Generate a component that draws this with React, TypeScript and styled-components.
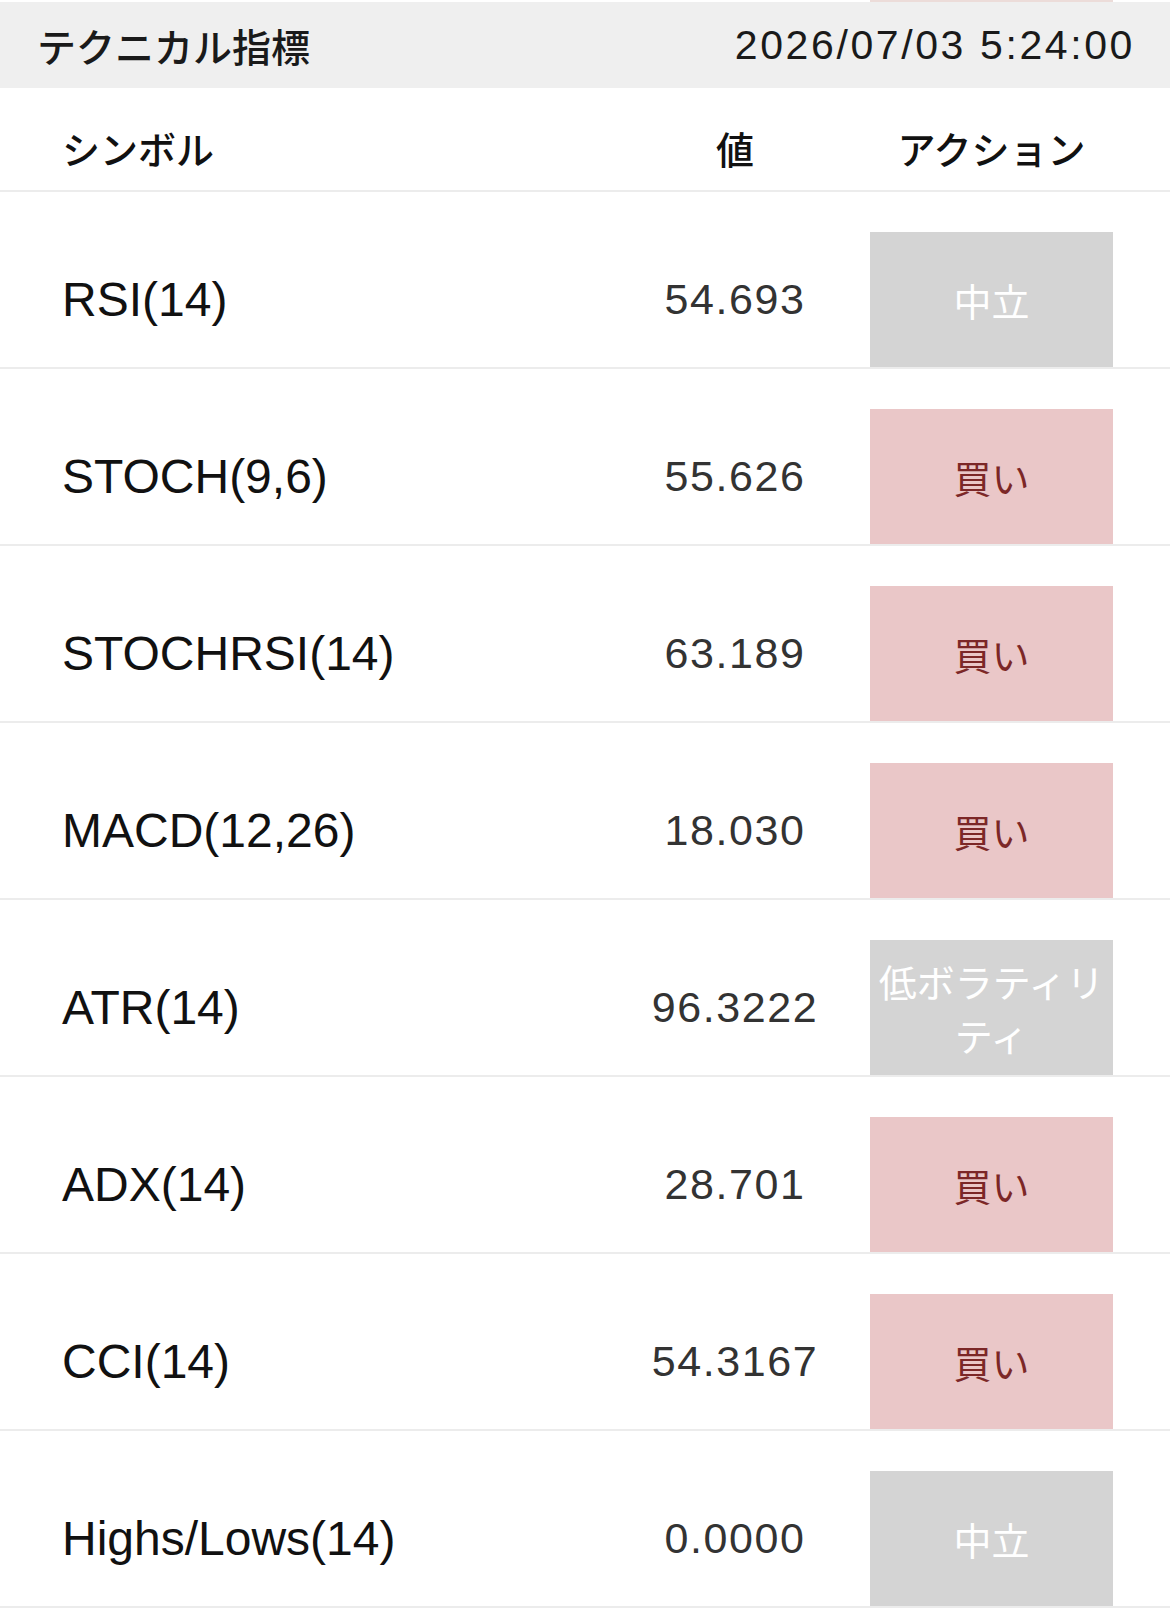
import React from 'react';
import styled, { createGlobalStyle } from 'styled-components';

const GlobalStyle = createGlobalStyle`
  body {
    margin: 0;
    background: #fff;
    font-family: 'Liberation Sans', 'Noto Sans CJK JP', sans-serif;
  }
`;

const Page = styled.div`
  width: 1170px;
  background: #fff;
`;

// bottom edge of the previous block, cut off by the screenshot
const Sliver = styled.div`
  height: 2px;
  display: flex;
  padding-left: 870px;
`;

const SliverPiece = styled.div`
  width: 243px;
  background: #ecdcd9;
`;

const TitleBar = styled.div`
  height: 86px;
  display: flex;
  align-items: center;
  justify-content: space-between;
  padding: 0 37px;
  background: #efefef;
  color: #1a1a1a;
`;

const Title = styled.div`
  font-family: 'Noto Sans CJK JP', sans-serif;
  font-size: 39px;
  font-weight: 500;
  line-height: 1;
`;

const Stamp = styled.div`
  font-size: 41px;
  letter-spacing: 2.6px;
  line-height: 1;
  margin-right: -2px;
`;

const Grid = styled.div`
  display: grid;
  grid-template-columns: 1fr 270px 243px;
  padding: 0 57px 0 62px;
  align-items: center;
`;

const HeadRow = styled(Grid)`
  padding-top: 18px;
  box-sizing: border-box;
  border-bottom: 2px solid #ececec;
  height: 104px;
`;

const HeadCell = styled.div<{ $center?: boolean }>`
  font-family: 'Noto Sans CJK JP', sans-serif;
  font-size: 38px;
  font-weight: 500;
  line-height: 1;
  color: #111;
  text-align: ${p => (p.$center ? 'center' : 'left')};
`;

const Row = styled(Grid)`
  padding-top: 40px;
  border-bottom: 2px solid #ececec;
`;

const Symbol = styled.div`
  font-size: 48px;
  color: #111;
  line-height: 1;
`;

const Value = styled.div`
  font-size: 43px;
  letter-spacing: 1.6px;
  color: #333;
  text-align: center;
  line-height: 1;
`;

const Badge = styled.div<{ $kind: 'buy' | 'neutral' }>`
  height: 135px;
  display: flex;
  align-items: center;
  justify-content: center;
  text-align: center;
  font-family: 'Noto Sans CJK JP', sans-serif;
  font-size: 38px;
  line-height: 54px;
  background: ${p => (p.$kind === 'buy' ? '#eac7c8' : '#d4d4d4')};
  color: ${p => (p.$kind === 'buy' ? '#7c2727' : '#fff')};
`;

type Indicator = {
  symbol: string;
  value: string;
  action: string;
  kind: 'buy' | 'neutral';
};

const rows: Indicator[] = [
  { symbol: 'RSI(14)', value: '54.693', action: '中立', kind: 'neutral' },
  { symbol: 'STOCH(9,6)', value: '55.626', action: '買い', kind: 'buy' },
  { symbol: 'STOCHRSI(14)', value: '63.189', action: '買い', kind: 'buy' },
  { symbol: 'MACD(12,26)', value: '18.030', action: '買い', kind: 'buy' },
  { symbol: 'ATR(14)', value: '96.3222', action: '低ボラティリティ', kind: 'neutral' },
  { symbol: 'ADX(14)', value: '28.701', action: '買い', kind: 'buy' },
  { symbol: 'CCI(14)', value: '54.3167', action: '買い', kind: 'buy' },
  { symbol: 'Highs/Lows(14)', value: '0.0000', action: '中立', kind: 'neutral' },
];

const App: React.FC = () => {
  return (
    <Page>
      <GlobalStyle />
      <Sliver>
        <SliverPiece />
      </Sliver>
      <TitleBar>
        <Title>テクニカル指標</Title>
        <Stamp>2026/07/03 5:24:00</Stamp>
      </TitleBar>
      <HeadRow>
        <HeadCell>シンボル</HeadCell>
        <HeadCell $center>値</HeadCell>
        <HeadCell $center>アクション</HeadCell>
      </HeadRow>
      {rows.map(r => (
        <Row key={r.symbol}>
          <Symbol>{r.symbol}</Symbol>
          <Value>{r.value}</Value>
          <Badge $kind={r.kind}>{r.action}</Badge>
        </Row>
      ))}
    </Page>
  );
};

export default App;
